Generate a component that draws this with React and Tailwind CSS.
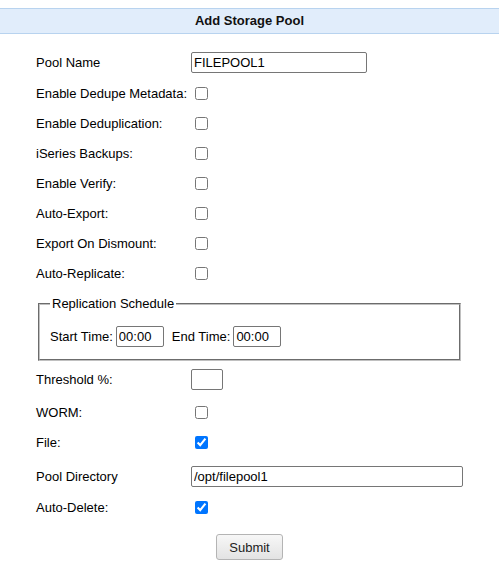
import React from "react";

const inputCls =
  "h-[21px] border border-[#767676] rounded-[2px] px-[2px] text-[13px] text-black bg-white outline-none";

function Row({ h, label, children }) {
  return (
    <div className="flex items-center pl-[36px]" style={{ height: h }}>
      <div className="w-[155px] shrink-0">{label}</div>
      <div className="flex items-center">{children}</div>
    </div>
  );
}

function Check({ checked }) {
  return (
    <input
      type="checkbox"
      defaultChecked={checked}
      className="ml-[4px] w-[13px] h-[13px]"
    />
  );
}

export default function App() {
  return (
    <div
      className="w-[499px] h-[578px] bg-white text-black text-[13px] leading-[15px]"
      style={{ fontFamily: '"Liberation Sans", Arial, sans-serif' }}
    >
      <div className="pt-[8px]">
        <div className="h-[26px] flex items-center justify-center pb-[1px] bg-[#e1edfb] border-y border-[#b8d3ef] font-bold text-[13px] text-[#111]">
          Add Storage Pool
        </div>
      </div>

      <div className="pt-[12px]">
        <Row h={32} label="Pool Name">
          <input type="text" defaultValue="FILEPOOL1" className={inputCls + " w-[176px]"} />
        </Row>
        <Row h={30} label="Enable Dedupe Metadata:">
          <Check />
        </Row>
        <Row h={30} label="Enable Deduplication:">
          <Check />
        </Row>
        <Row h={30} label="iSeries Backups:">
          <Check />
        </Row>
        <Row h={30} label="Enable Verify:">
          <Check />
        </Row>
        <Row h={30} label="Auto-Export:">
          <Check />
        </Row>
        <Row h={30} label="Export On Dismount:">
          <Check />
        </Row>
        <Row h={30} label="Auto-Replicate:">
          <Check />
        </Row>

        <fieldset className="ml-[38px] mt-[8px] w-[423px] border-2 [border-style:groove] border-[#c0c0c0] pl-[10px] pr-[10px] pt-[15px] pb-[12px]">
          <legend className="px-[2px]">Replication Schedule</legend>
          <div className="flex items-center h-[21px]">
            <span>Start Time:</span>
            <input type="text" defaultValue="00:00" className={inputCls + " w-[48px] ml-[3px]"} />
            <span className="ml-[8px]">End Time:</span>
            <input type="text" defaultValue="00:00" className={inputCls + " w-[48px] ml-[3px]"} />
          </div>
        </fieldset>

        <Row h={37} label="Threshold %:">
          <input type="text" defaultValue="" className={inputCls + " w-[32px]"} />
        </Row>
        <Row h={29} label="WORM:">
          <Check />
        </Row>
        <Row h={30} label="File:">
          <Check checked />
        </Row>
        <Row h={38} label="Pool Directory">
          <input type="text" defaultValue="/opt/filepool1" className={inputCls + " w-[272px]"} />
        </Row>
        <Row h={25} label="Auto-Delete:">
          <Check checked />
        </Row>

        <div className="flex justify-center pt-[14px]">
          <button
            type="button"
            className="w-[67px] h-[26px] rounded-[3px] border border-[#b4b4b4] bg-gradient-to-b from-[#f7f7f7] to-[#e3e3e3] text-[13px] text-[#222]"
          >
            Submit
          </button>
        </div>
      </div>
    </div>
  );
}
